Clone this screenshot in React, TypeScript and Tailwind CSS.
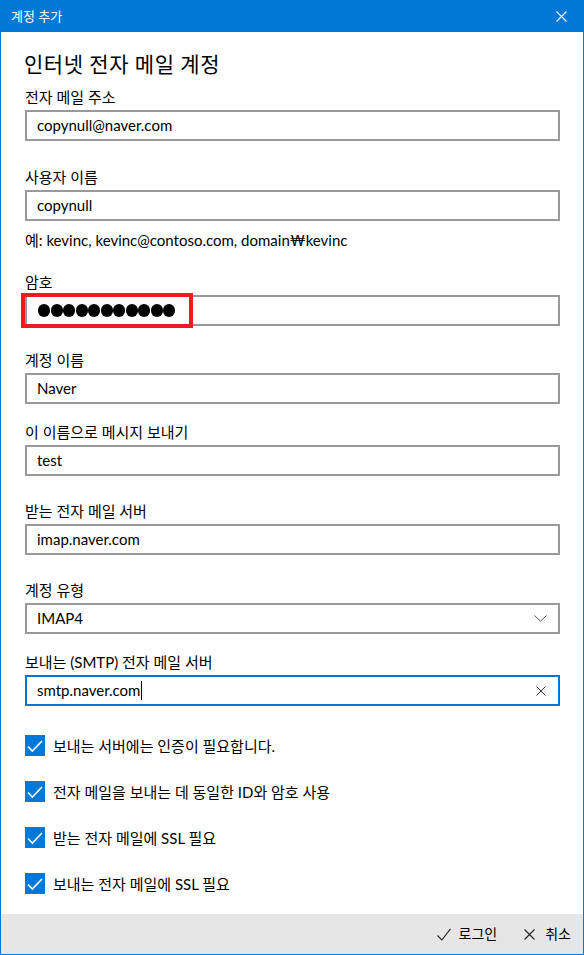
import React from "react";

const font = { fontFamily: '"Segoe UI", Lato, "Noto Sans CJK KR", sans-serif' };

function Label({ text, mt }: { text: string; mt: string }) {
  return <div className={`${mt} h-[20px] leading-[20px] text-[15px] text-black whitespace-nowrap`}>{text}</div>;
}

function TextBox({ children, focused = false }: { children: React.ReactNode; focused?: boolean }) {
  return (
    <div
      className={`mt-[3px] w-[535px] h-[31px] border-2 ${
        focused ? "border-[#0078d7]" : "border-[#999999]"
      } bg-white flex items-center pl-[10px] pr-[10px] text-[15px] text-black relative`}
    >
      {children}
    </div>
  );
}

function Check({ text, mt }: { text: string; mt: string }) {
  return (
    <div className={`${mt} flex items-center h-[21px]`}>
      <div className="w-[20px] h-[21px] bg-[#0078d7] flex items-center justify-center shrink-0">
        <svg width="20" height="21" viewBox="0 0 20 21">
          <path d="M3 11.5 L7.3 16 L17 6" fill="none" stroke="white" strokeWidth="1.6" />
        </svg>
      </div>
      <span className="ml-[8px] text-[15px] leading-[20px] text-black whitespace-nowrap">{text}</span>
    </div>
  );
}

export default function App() {
  return (
    <div style={font} className="w-[584px] h-[955px] bg-white border-x border-b border-[#0078d7] flex flex-col overflow-hidden">
      {/* title bar */}
      <div className="h-[32px] bg-[#0078d7] flex items-center justify-between pl-[11px] pr-[17px] -mx-px shrink-0">
        <span className="text-[13px] text-white leading-[20px]">계정 추가</span>
        <svg width="11" height="11" viewBox="0 0 11 11">
          <path d="M0.5 0.5 L10.5 10.5 M10.5 0.5 L0.5 10.5" stroke="white" strokeWidth="1.1" />
        </svg>
      </div>

      <div className="px-[24px] flex flex-col">
        <div className="mt-[18px] h-[28px] leading-[28px] text-[21px] text-black -ml-px tracking-[0.5px]">인터넷 전자 메일 계정</div>

        <Label text="전자 메일 주소" mt="mt-[9px]" />
        <TextBox>copynull@naver.com</TextBox>

        <Label text="사용자 이름" mt="mt-[26px]" />
        <TextBox>copynull</TextBox>

        <div className="mt-[9px] h-[20px] leading-[20px] text-[15px] text-black whitespace-nowrap">
          예: kevinc, kevinc@contoso.com, domain₩kevinc
        </div>

        <Label text="암호" mt="mt-[22px]" />
        <TextBox>
          <div className="flex gap-[0.5px] ml-px">
            {Array.from({ length: 11 }).map((_, i) => (
              <div key={i} className="w-[12px] h-[13px] rounded-full bg-black" />
            ))}
          </div>
          <div className="absolute left-[-6px] top-[-4px] w-[172px] h-[35px] border-[4px] border-[#ed1c24]" />
        </TextBox>

        <Label text="계정 이름" mt="mt-[24px]" />
        <TextBox>Naver</TextBox>

        <Label text="이 이름으로 메시지 보내기" mt="mt-[18px]" />
        <TextBox>test</TextBox>

        <Label text="받는 전자 메일 서버" mt="mt-[25px]" />
        <TextBox>imap.naver.com</TextBox>

        <Label text="계정 유형" mt="mt-[25px]" />
        <TextBox>
          <span className="flex-1">IMAP4</span>
          <svg width="13" height="7" viewBox="0 0 13 7" className="mr-px">
            <path d="M0.5 0.5 L6.5 6.3 L12.5 0.5" fill="none" stroke="#555555" strokeWidth="1" />
          </svg>
        </TextBox>

        <Label text="보내는 (SMTP) 전자 메일 서버" mt="mt-[18px]" />
        <TextBox focused>
          <span>smtp.naver.com</span>
          <span className="w-px h-[19px] bg-black ml-px" />
          <span className="flex-1" />
          <svg width="10" height="10" viewBox="0 0 10 10" className="mr-[2px]">
            <path d="M0.5 0.5 L9.5 9.5 M9.5 0.5 L0.5 9.5" stroke="#333333" strokeWidth="1" />
          </svg>
        </TextBox>

        <Check text="보내는 서버에는 인증이 필요합니다." mt="mt-[29px]" />
        <Check text="전자 메일을 보내는 데 동일한 ID와 암호 사용" mt="mt-[25px]" />
        <Check text="받는 전자 메일에 SSL 필요" mt="mt-[25px]" />
        <Check text="보내는 전자 메일에 SSL 필요" mt="mt-[25px]" />
      </div>

      {/* footer */}
      <div className="mt-auto h-[40px] bg-[#e6e6e6] flex items-center justify-end pr-[12px] shrink-0">
        <div className="flex items-center">
          <svg width="14" height="13" viewBox="0 0 14 13">
            <path d="M0.5 7.5 L4.8 12 L13.5 0.8" fill="none" stroke="#222222" strokeWidth="1.1" />
          </svg>
          <span className="ml-[8px] text-[14px] leading-[20px] text-black">로그인</span>
        </div>
        <div className="flex items-center ml-[27px]">
          <svg width="11" height="11" viewBox="0 0 11 11">
            <path d="M0.5 0.5 L10.5 10.5 M10.5 0.5 L0.5 10.5" stroke="#222222" strokeWidth="1.1" />
          </svg>
          <span className="ml-[10px] text-[14px] leading-[20px] text-black">취소</span>
        </div>
      </div>
    </div>
  );
}
